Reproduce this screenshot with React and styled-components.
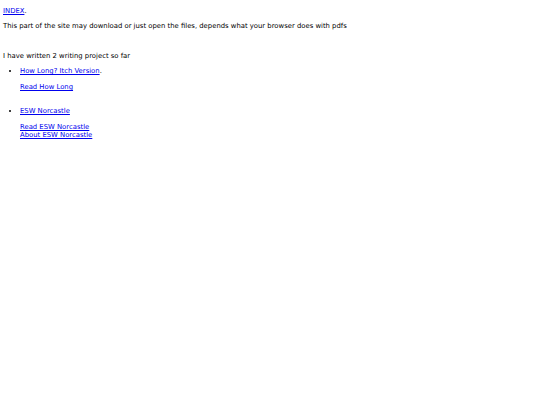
import React from "react";
import styled, { createGlobalStyle } from "styled-components";

const Global = createGlobalStyle`
  html, body { margin: 0; padding: 0; background: #fff; }
  body {
    font-family: "DejaVu Sans", Verdana, sans-serif;
    font-size: 6.85px;
    line-height: 8px;
    color: #000;
  }
`;

const Page = styled.div`
  padding: 0 3px;
`;

const Para = styled.p`
  margin: ${(p) => p.$top ?? 8}px 0 ${(p) => p.$bottom ?? 8}px;
`;

const Link = styled.a`
  color: #0000ee;
  text-decoration: underline;
`;

const List = styled.ul`
  margin: ${(p) => p.$top ?? 7}px 0 0;
  padding-left: 17px;
  list-style: disc;
`;

const Item = styled.li``;

export default function App() {
  return (
    <>
      <Global />
      <Page>
        <Para $top={7} $bottom={7}>
          <Link href="#">INDEX</Link>.
        </Para>
        <Para $top={7} $bottom={22}>
          This part of the site may download or just open the files, depends what your browser does with pdfs
        </Para>
        <Para $top={0} $bottom={0}>I have written 2 writing project so far</Para>
        <List $top={7}>
          <Item>
            <Link href="#">How Long? Itch Version</Link>.
            <Para>
              <Link href="#">Read How Long</Link>
            </Para>
          </Item>
        </List>
        <List $top={16}>
          <Item>
            <Link href="#">ESW Norcastle</Link>
            <Para>
              <Link href="#">Read ESW Norcastle</Link>
              <br />
              <Link href="#">About ESW Norcastle</Link>
            </Para>
          </Item>
        </List>
      </Page>
    </>
  );
}
